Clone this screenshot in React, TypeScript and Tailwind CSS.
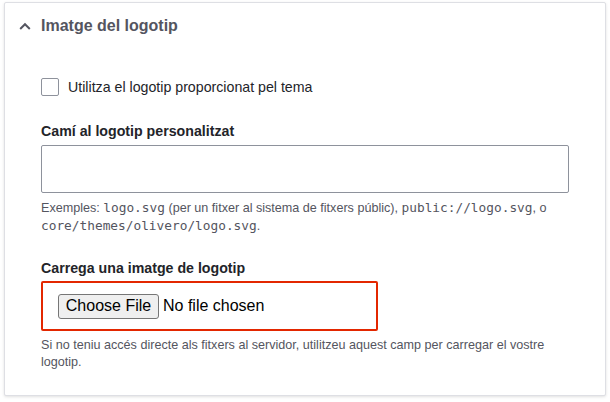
import React from 'react';

const sans = { fontFamily: '"Liberation Sans", Arial, sans-serif' };
const mono = { fontFamily: '"DejaVu Sans Mono", monospace' };

const App = () => {
  return (
    <div className="min-h-screen bg-white pt-[2px] pl-[4px] pr-[4px]" style={sans}>
      {/* Details card */}
      <div className="w-[602px] h-[394px] bg-white border border-[#dedfe4] rounded-[2px] shadow-[0_1px_3px_rgba(0,0,0,0.12)]">
        {/* Summary */}
        <div className="h-[46px] flex items-center pl-[14px]">
          <svg width="12" height="8" viewBox="0 0 12 8" className="mr-[10px]">
            <path d="M1.2 7 L6 2.2 L10.8 7" fill="none" stroke="#545560" strokeWidth="2" />
          </svg>
          <span className="text-[16px] font-bold text-[#545560] leading-[18px]">Imatge del logotip</span>
        </div>

        <div className="pl-[36px] pr-[35px]">
          {/* Checkbox */}
          <label className="mt-[29px] flex items-center h-[18px]">
            <span className="w-[18px] h-[18px] border border-[#8e929c] rounded-[2px] bg-white" />
            <span className="ml-[9px] text-[14.2px] text-[#232429] leading-[18px]">
              Utilitza el logotip proporcionat pel tema
            </span>
          </label>

          {/* Logo path */}
          <div className="mt-[26px] text-[14.2px] font-bold text-[#232429] leading-[18px]">
            Camí al logotip personalitzat
          </div>
          <div className="mt-[5px] w-[528px] h-[48px] border border-[#8e929c] rounded-[2px] bg-white" />
          <p className="mt-[6px] text-[12.6px] leading-[18px] text-[#545560]">
            Exemples: <code className="text-[12.8px]" style={mono}>logo.svg</code> (per un fitxer al sistema de
            fitxers públic), <code className="text-[12.8px]" style={mono}>public://logo.svg</code>, o{' '}
            <code className="text-[12.8px]" style={mono}>core/themes/olivero/logo.svg</code>.
          </p>

          {/* Upload */}
          <div className="mt-[24px] text-[14.2px] font-bold text-[#232429] leading-[18px]">
            Carrega una imatge de logotip
          </div>
          <div className="mt-[4px] w-[337px] h-[50px] border-2 border-[#e32700] rounded-[2px] flex items-center pl-[15px]">
            <span className="h-[25px] w-[101px] flex items-center justify-center bg-[#efefef] border border-[#767676] rounded-[3px] text-[16px] text-black">
              Choose File
            </span>
            <span className="ml-[4px] text-[16px] text-black">No file chosen</span>
          </div>
          <p className="mt-[6px] text-[12.6px] leading-[17px] text-[#545560]">
            Si no teniu accés directe als fitxers al servidor, utilitzeu aquest camp per carregar el vostre logotip.
          </p>
        </div>
      </div>
    </div>
  );
};

export default App;
